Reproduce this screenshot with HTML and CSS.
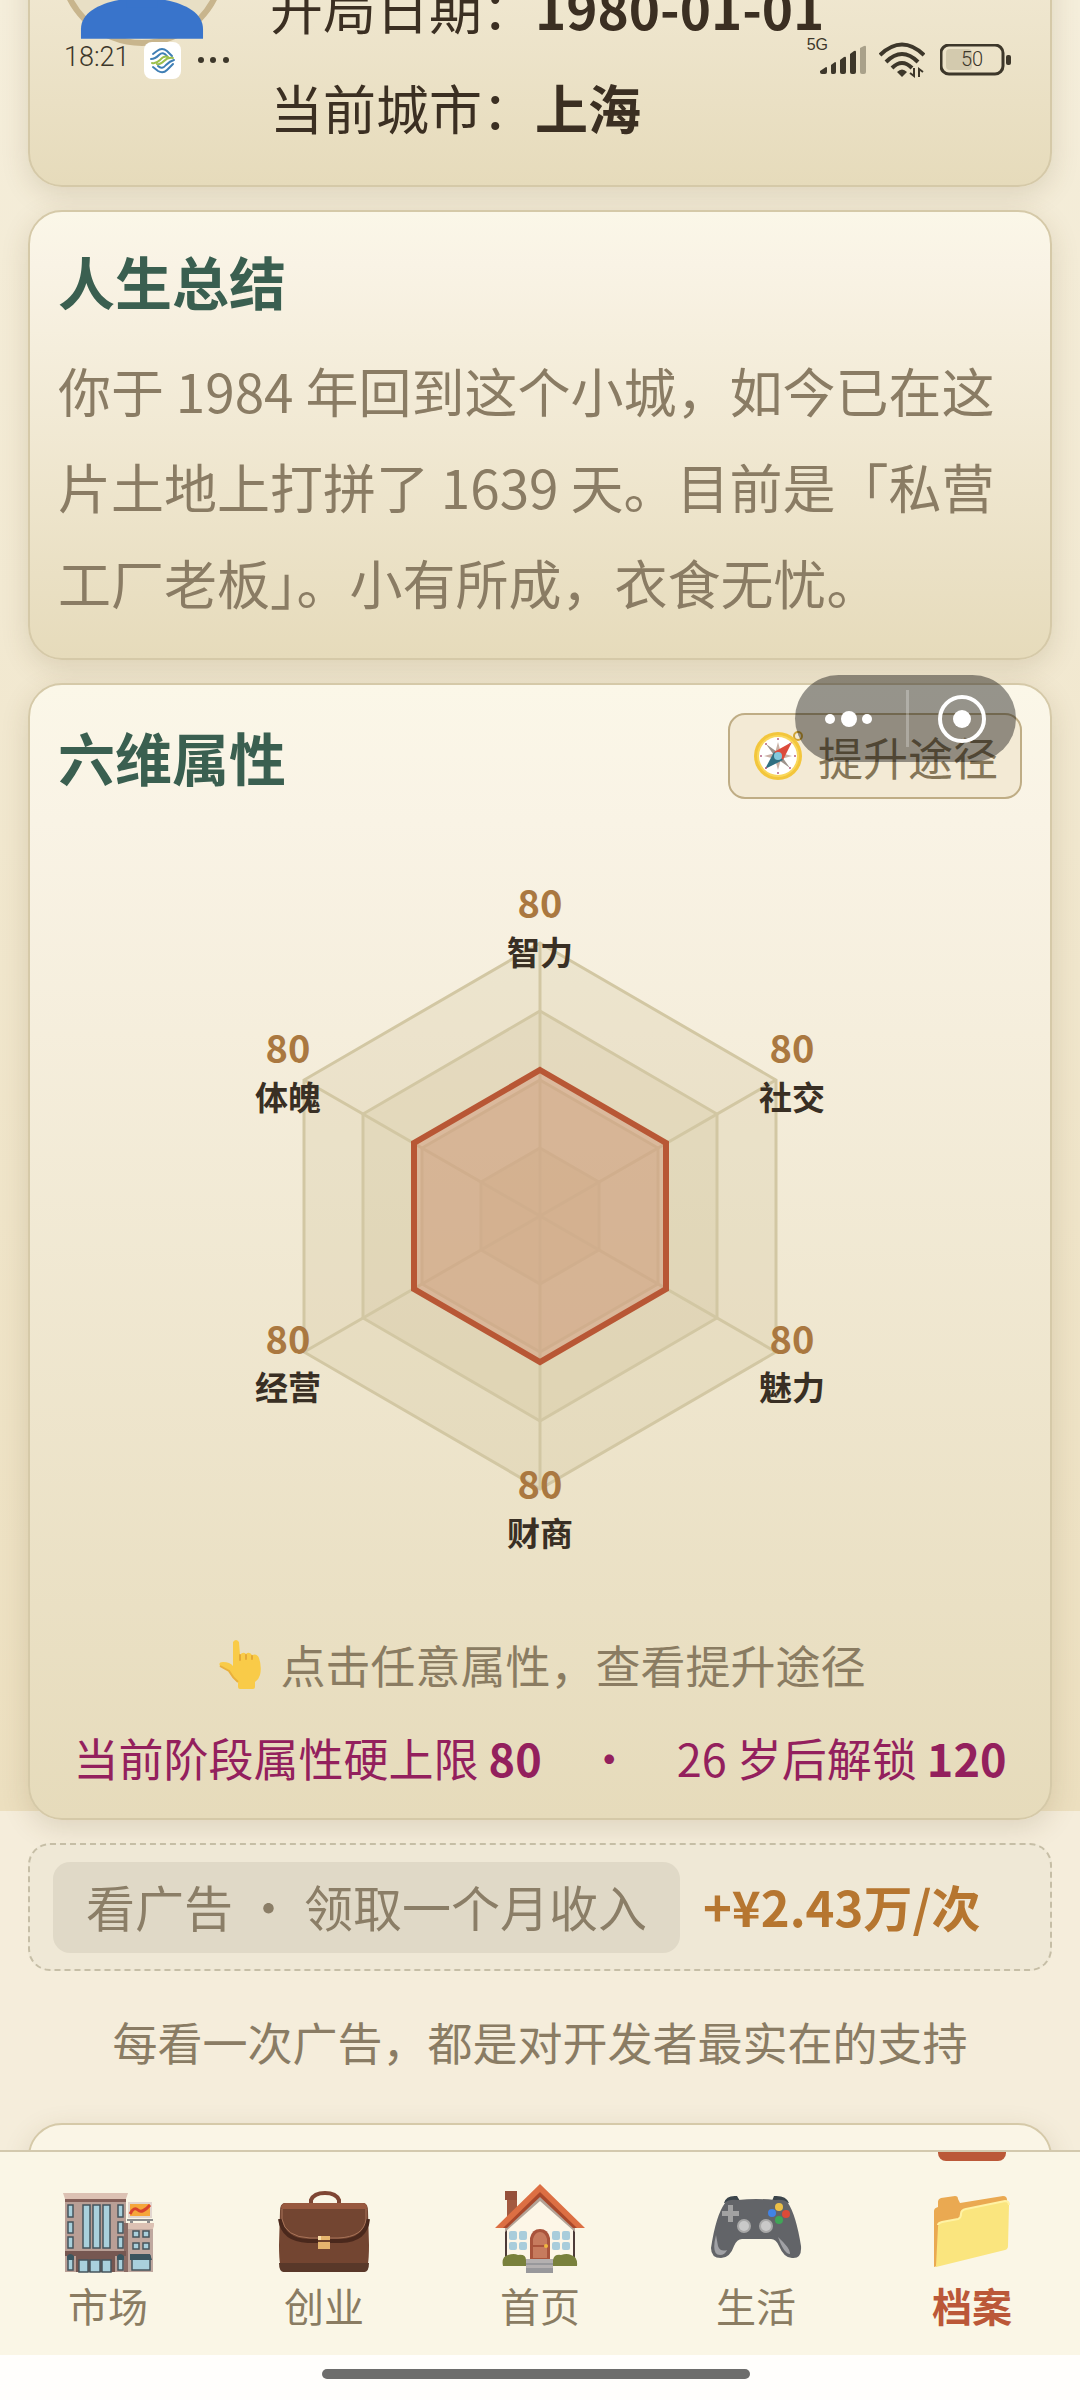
FILE: index.html
```html
<!DOCTYPE html>
<html lang="zh-CN">
<head>
<meta charset="utf-8">
<meta name="viewport" content="width=device-width, initial-scale=1">
<title>档案</title>
<link rel="stylesheet" href="styles.css">
</head>
<body>
<div class="status">
  <div class="status-left">
    <span class="clock">18:21</span>
    <svg class="carrier" viewBox="0 0 37 37" aria-hidden="true">
      <rect width="37" height="37" rx="8" fill="#fff"/>
      <g fill="none" stroke-linecap="round">
        <path d="M9 12 L13 9 Q18 5 23 9 L28 14 M7 17 Q11 17 15 13 Q19 9 23 14 M9 25 L14 29 Q19 32 23 28 L29 22 M30 18 Q26 19 22 23 Q18 28 14 24" stroke="#3f7fb5" stroke-width="2"/>
        <path d="M8 21 Q12 22 16 18 Q20 13 24 15 M13 22 Q16 23 20 19 Q24 15 29 16" stroke="#9cc04c" stroke-width="2"/>
      </g>
    </svg>
    <svg class="more" viewBox="0 0 32 8" aria-hidden="true" fill="#3d372a"><circle cx="4" cy="4" r="3"/><circle cx="16" cy="4" r="3"/><circle cx="29" cy="4" r="3"/></svg>
  </div>
  <div class="status-right">
    <span class="net">5G</span>
    <svg class="signal" viewBox="0 0 46 30" aria-hidden="true" fill="#3d372a">
      <path d="M0 26 L6 22 Q7 22 7 23 V27 Q7 29 5 29 H2 Q0 29 0 27Z"/>
      <path d="M11 20 L15 17 Q16 17 16 18 V27 Q16 29 14 29 H12 Q11 29 11 27Z"/>
      <path d="M20 15 L24 12 Q26 11 26 13 V27 Q26 29 24 29 H22 Q20 29 20 27Z"/>
      <path d="M30 9 L34 6 Q36 5 36 7 V27 Q36 29 34 29 H32 Q30 29 30 27Z"/>
      <path d="M40 3 L44 1 Q46 0 46 2 V27 Q46 29 44 29 H42 Q40 29 40 27Z" fill="#a9a18a"/>
    </svg>
    <svg class="wifi" viewBox="0 0 46 36" aria-hidden="true">
      <g fill="none" stroke="#3d372a" stroke-width="4">
        <path d="M1 13 Q23 -8 45 13"/><path d="M7 20 Q23 4 39 20"/><path d="M13 26 Q23 16 33 26"/>
      </g>
      <path d="M18 30 Q23 25 28 30 L23 35Z" fill="#3d372a"/>
      <path d="M35 26 V34 L31 31 M40 35 V27 L44 30" fill="none" stroke="#3d372a" stroke-width="2"/>
    </svg>
    <svg class="battery" viewBox="0 0 72 32" aria-hidden="true">
      <rect x="6" y="5" width="26" height="21" rx="4" fill="#d3caae"/>
      <rect x="1" y="1" width="62" height="29" rx="8" fill="none" stroke="#3d372a" stroke-width="3"/>
      <rect x="66" y="11" width="5" height="10" rx="2" fill="#3d372a"/>
      <text x="32" y="22" text-anchor="middle" class="battery-text">50</text>
    </svg>
  </div>
</div>

<main class="content">
  <section class="card profile">
    <div class="avatar">
      <svg viewBox="0 0 128 156" aria-hidden="true"><circle cx="64" cy="58" r="42" fill="#3974cb"/><path d="M2 156 V146 C2 104 126 104 126 146 V156Z" fill="#3974cb"/><path d="M48 90 H80 V124 H48Z" fill="#3974cb"/></svg>
    </div>
    <div class="info">
      <p>开局日期：<strong>1980-01-01</strong></p>
      <p>当前城市：<strong>上海</strong></p>
    </div>
  </section>

  <section class="card summary">
    <h2>人生总结</h2>
    <p>你于 1984 年回到这个小城，如今已在这片土地上打拼了 1639 天。目前是「私营工厂老板」。小有所成，衣食无忧。</p>
  </section>

  <section class="card attributes">
    <header class="card-head">
      <h2>六维属性</h2>
      <button class="improve" type="button">
        <svg viewBox="0 0 50 50" aria-hidden="true">
          <circle cx="44" cy="5" r="4" fill="none" stroke="#d0a335" stroke-width="2"/>
          <circle cx="24" cy="25" r="24" fill="#f3c63c"/>
          <circle cx="24" cy="25" r="21" fill="#f9d75c"/>
          <circle cx="24" cy="25" r="19" fill="#fff"/>
          <path d="M24 11 L27 22 L38 25 L27 28 L24 39 L21 28 L10 25 L21 22Z" fill="#c9b1a5"/>
          <path d="M36 37 L22 27 L12 13 L26 23Z" fill="#9d938c"/>
          <path d="M38 11 L29 29 L20 21Z" fill="#dc4b3c"/>
          <path d="M11 38 L20 21 L29 29Z" fill="#2f7082"/>
          <circle cx="24" cy="25" r="4" fill="#83c8dc"/>
          <g fill="#b45f83"><circle cx="24" cy="8" r="1"/><circle cx="24" cy="42" r="1"/><circle cx="7" cy="25" r="1"/><circle cx="41" cy="25" r="1"/><circle cx="12" cy="13" r="1"/><circle cx="36" cy="13" r="1"/><circle cx="12" cy="37" r="1"/><circle cx="36" cy="37" r="1"/></g>
        </svg>
        提升途径
      </button>
    </header>
    <svg class="radar" viewBox="-340 -340 680 680" role="img" aria-label="六维属性">
      <g class="grid">
        <polygon points="0,-273 236,-136 236,136 0,273 -236,136 -236,-136"/>
        <polygon points="0,-205 177,-102 177,102 0,205 -177,102 -177,-102"/>
        <polygon points="0,-136 118,-68 118,68 0,136 -118,68 -118,-68"/>
        <polygon points="0,-68 59,-34 59,34 0,68 -59,34 -59,-34"/>
        <path d="M0 -273 V273 M-236 -136 L236 136 M-236 136 L236 -136"/>
      </g>
      <polygon class="area" points="0,-146 126,-73 126,73 0,146 -126,73 -126,-73"/>
      <g class="value"><text x="0" y="-298">80</text><text x="252" y="-153">80</text><text x="252" y="138">80</text><text x="0" y="283">80</text><text x="-252" y="138">80</text><text x="-252" y="-153">80</text></g>
      <g class="name"><text x="0" y="-251">智力</text><text x="252" y="-106">社交</text><text x="252" y="184">魅力</text><text x="0" y="330">财商</text><text x="-252" y="184">经营</text><text x="-252" y="-106">体魄</text></g>
    </svg>
    <p class="hint">
      <svg viewBox="0 0 46 52" aria-hidden="true"><path d="M15 3 Q18 -1 21 3 L22 16 Q25 12 28 15 Q31 12 34 16 Q39 14 41 19 Q44 28 42 36 Q41 40 37 43 V48 Q37 50 35 50 H22 Q20 50 20 48 V43 Q15 39 11 32 L2 27 Q0 23 5 23 Q12 23 15 27Z" fill="#f9cb48"/><path d="M22 16 V21 M28 16 V20 M34 17 V20" fill="none" stroke="#e4a937" stroke-width="2" stroke-linecap="round"/><path d="M2 27 L11 32 Q15 39 20 43" fill="none" stroke="#e9b03c" stroke-width="2"/></svg>
      点击任意属性，查看提升途径
    </p>
    <p class="limit">当前阶段属性硬上限 <strong>80</strong>　·　26 岁后解锁 <strong>120</strong></p>
  </section>

  <div class="ad">
    <button class="ad-button" type="button">看广告 · 领取一个月收入</button>
    <strong class="reward">+¥2.43万/次</strong>
  </div>
  <p class="support">每看一次广告，都是对开发者最实在的支持</p>
  <section class="card next"></section>
</main>

<div class="capsule">
  <button type="button" aria-label="更多"><svg viewBox="0 0 110 87"><circle cx="35" cy="44" r="5"/><circle cx="54" cy="44" r="8"/><circle cx="72" cy="44" r="5"/></svg></button>
  <button type="button" aria-label="关闭"><svg viewBox="0 0 110 87"><circle cx="56" cy="44" r="22" fill="none" stroke="#fff" stroke-width="4"/><circle cx="56" cy="44" r="9"/></svg></button>
</div>

<nav class="tabs">
  <a href="#market">
    <svg viewBox="0 0 92 92" aria-hidden="true">
      <path d="M3 15 H64 V89 H3Z" fill="#b99f96"/><path d="M1 10 H66 L64 16 H3Z" fill="#dcc1b3"/><path d="M3 16 H64 V19 H3Z" fill="#846059"/>
      <path d="M64 44 H91 V89 H64Z" fill="#bfa89f"/><path d="M64 40 H93 L91 46 H64Z" fill="#dcc1b3"/><path d="M62 40 H66 V89 H62Z" fill="#8c6c65"/>
      <path d="M3 68 H64 V73 H3Z" fill="#765751"/><path d="M14 72 H53 V89 H14Z" fill="#765751"/>
      <g fill="#a9d0dc" stroke="#45545c" stroke-width="1.5"><path d="M21 22 H28 V65 H21Z M31 22 H38 V65 H31Z M41 22 H48 V65 H41Z M6 22 H11 V34 H6Z M6 39 H11 V50 H6Z M6 54 H11 V65 H6Z M56 22 H61 V34 H56Z M56 39 H61 V50 H56Z M56 54 H61 V65 H56Z M17 77 H26 V89 H17Z M28 77 H38 V89 H28Z M40 77 H49 V89 H40Z M6 74 H11 V87 H6Z M56 74 H61 V87 H56Z M71 48 H77 V54 H71Z M81 48 H87 V54 H81Z M71 60 H77 V66 H71Z M81 60 H87 V66 H81Z M70 73 H88 V87 H70Z"/></g>
      <path d="M5 77 V73 Q8 69 12 73 V77Z M55 77 V73 Q58 69 62 73 V77Z M68 77 V71 H88 L90 77Z" fill="#3a555f"/>
      <path d="M66 19 H90 V35 H66Z" fill="#e2d6cf"/><path d="M68 21 H88 V33 H68Z" fill="#f5a63a"/><path d="M68 31 Q72 23 76 27 T88 22" fill="none" stroke="#d9432c" stroke-width="3"/><path d="M65 36 H91 V38 H65Z M68 38 H71 V40 H68Z M85 38 H88 V40 H85Z" fill="#8c8c8c"/>
    </svg>
    <span>市场</span>
  </a>
  <a href="#startup">
    <svg viewBox="0 0 92 92" aria-hidden="true">
      <path d="M33 22 V17 Q36 10 47 10 Q58 10 61 17 V22" fill="none" stroke="#7f4634" stroke-width="4"/>
      <path d="M6 20 Q2 21 2 28 L1 62 Q1 89 6 89 H86 Q91 89 91 62 L90 28 Q90 21 86 20Z" fill="#734531"/>
      <path d="M1 80 Q1 89 6 89 H86 Q91 89 91 80Z" fill="#593829"/>
      <path d="M3 24 Q4 20 8 20 H85 Q89 20 89 25 L88 27 H4Z" fill="#98593f"/>
      <path d="M2 36 Q5 57 30 58 H63 Q88 57 90 36" fill="none" stroke="#4a281c" stroke-width="4"/>
      <path d="M4 26 V36 Q7 54 32 55 H60 Q86 54 88 36 V26" fill="#734531" stroke="#a87358" stroke-width="1"/>
      <path d="M40 53 H52 V66 H40Z" fill="#e5b46e"/><path d="M40 57 H52 V59 H40Z" fill="#6d412b"/><path d="M40 53 H43 V57 H40Z" fill="#f8dda9"/>
    </svg>
    <span>创业</span>
  </a>
  <a href="#home">
    <svg viewBox="0 0 92 92" aria-hidden="true">
      <path d="M13 8 H23 V30 L13 38Z" fill="#a35a40"/><path d="M11 8 H23 V17 H11Z" fill="#95503a"/>
      <path d="M12 42 L46 10 L80 42 V80 H12Z" fill="#fdf6e7"/><path d="M12 44 V76 M80 44 V76" stroke="#4d3b38" stroke-width="2"/>
      <path d="M11 44 L46 13 L81 44 V49 L46 18 L11 49Z" fill="#b3a397"/>
      <path d="M46 1 L91 45 H81 L46 11 L11 45 H1Z" fill="#dc6f43"/><path d="M46 9 L83 45 H79 L46 14 L13 45 H9Z" fill="#a9482b"/>
      <path d="M36 77 V55 Q38 46 46 46 Q54 46 56 55 V77Z" fill="#a9543c"/><path d="M39 75 V56 Q41 49 46 49 Q51 49 53 56 V75Z" fill="#c77b5e"/><path d="M38 63 H54" stroke="#a9543c" stroke-width="2"/><circle cx="52" cy="63" r="2" fill="#f0b840"/>
      <g fill="#a9cddb"><rect x="15" y="48" width="8" height="9" rx="2"/><rect x="25" y="48" width="8" height="9" rx="2"/><rect x="15" y="59" width="8" height="8" rx="2"/><rect x="25" y="59" width="8" height="8" rx="2"/><rect x="58" y="48" width="8" height="9" rx="2"/><rect x="68" y="48" width="8" height="9" rx="2"/><rect x="58" y="59" width="8" height="8" rx="2"/><rect x="68" y="59" width="8" height="8" rx="2"/></g>
      <path d="M9 83 Q7 74 14 72 Q20 70 24 72 Q32 71 32 77 V83Z M59 83 V77 Q60 71 67 72 Q73 70 77 72 Q84 74 83 83Z" fill="#79813c"/>
      <path d="M32 76 H59 V90 H32Z" fill="#b4b0b0"/><path d="M32 80 H59 V82 H32Z M32 85 H59 V90 H32Z" fill="#98989b"/>
    </svg>
    <span>首页</span>
  </a>
  <a href="#life">
    <svg viewBox="0 0 92 92" aria-hidden="true">
      <path d="M14 20 Q16 12 27 13 L30 18 Z M62 18 L64 13 Q76 12 79 20Z" fill="#3b454b"/>
      <path d="M15 20 Q18 16 28 17 Q46 15 65 17 Q75 16 78 20 Q86 32 91 63 Q92 76 82 75 Q74 75 69 63 Q66 56 61 56 H32 Q27 56 24 63 Q20 75 11 75 Q1 75 1 65 Q6 32 15 20Z" fill="#626468"/>
      <path d="M6 52 Q1 72 10 72 Q15 72 17 67 Q10 69 8 63Z M68 54 Q74 71 80 71 Q81 66 68 54Z" fill="#a0a1a5"/>
      <path d="M18 22 H23 V28 H29 V33 H23 V39 H18 V33 H12 V28 H18Z" fill="#a2a2a2"/>
      <circle cx="34" cy="43" r="7" fill="#a8a8a8"/><circle cx="34" cy="43" r="5" fill="#c9c9c9"/><circle cx="56" cy="43" r="7" fill="#a8a8a8"/><circle cx="56" cy="43" r="5" fill="#c9c9c9"/>
      <circle cx="69" cy="24" r="4" fill="#ecc047"/><circle cx="62" cy="30" r="4" fill="#4183e5"/><circle cx="76" cy="31" r="4" fill="#dc4a38"/><circle cx="69" cy="37" r="4" fill="#40a657"/>
    </svg>
    <span>生活</span>
  </a>
  <a href="#archive" class="active" aria-current="page">
    <svg viewBox="0 0 92 92" aria-hidden="true">
      <path d="M8 84 V28 Q8 25 12 24 V19 Q12 16 15 15 L29 13 Q32 13 32 16 L34 20 L77 13 Q81 13 81 17 L80 60Z" fill="#eaa951"/>
      <path d="M10 83 L12 44 Q12 40 16 39 L32 36 Q35 35 35 31 Q35 27 40 26 L79 18 Q83 18 83 22 L82 63 Q82 66 79 67 L10 84Z" fill="#fae57e"/>
      <path d="M12 42 Q12 40 16 39 L32 36 Q35 35 35 31 Q35 27 40 26 L79 18 Q83 18 83 22" fill="none" stroke="#fff2a4" stroke-width="2"/>
    </svg>
    <span>档案</span>
  </a>
</nav>
<div class="gesture"><i></i></div>
</body>
</html>
```
FILE: styles.css
```css
* { box-sizing: border-box; }

body {
  margin: 0;
  height: 100vh;
  display: flex;
  flex-direction: column;
  overflow: hidden;
  position: relative;
  font-family: "Noto Sans CJK SC", "Noto Sans", sans-serif;
  font-size: 45px;
  color: #3b2f22;
  background: #fffefc;
}

h2, p { margin: 0; }
button { border: 0; padding: 0; font: inherit; color: inherit; background: none; }
svg { display: block; flex: none; }

/* status bar */
.status {
  position: absolute;
  z-index: 3;
  top: 0;
  left: 0;
  right: 0;
  height: 120px;
  padding: 0 68px 0 64px;
  display: flex;
  align-items: center;
  justify-content: space-between;
  color: #3d372a;
}
.status-left, .status-right { display: flex; align-items: center; }
.clock { width: 80px; padding-bottom: 6px; font: 300 27px/30px "Roboto", sans-serif; }
.carrier { width: 37px; height: 37px; }
.more { width: 32px; height: 8px; margin-left: 16px; }
.net { font: 16px/18px "Liberation Sans", sans-serif; align-self: flex-start; margin: -6px -8px 0 0; }
.signal { width: 46px; height: 30px; margin-right: 13px; }
.wifi { width: 46px; height: 36px; margin-right: 15px; }
.battery { width: 72px; height: 32px; }
.battery-text { font: 300 20px "Roboto", sans-serif; fill: #3d372a; }

/* scrolling content */
.content {
  flex: 1;
  min-height: 0;
  overflow: hidden;
  padding: 0 28px;
  display: flex;
  flex-direction: column;
  gap: 23px;
  background: linear-gradient(#f5eedb, #ecdfbf) 0 0 / 100% 1811px no-repeat #f5eddb;
}
.content > * { flex: none; }

.card {
  padding: 28px;
  border: 2px solid #d5c9a8;
  border-radius: 34px;
  background: linear-gradient(#fbf7e8, #f9f3e5 12%, #e6dbbb);
  box-shadow: 0 8px 28px rgba(90, 70, 30, .15);
}
.card h2 { font-size: 57px; line-height: 80px; font-weight: 700; color: #3a5f50; }

.profile { display: flex; min-height: 448px; margin-top: -261px; padding-bottom: 30px; gap: 44px; }
.avatar {
  width: 168px;
  height: 168px;
  align-self: center;
  display: flex;
  align-items: center;
  justify-content: center;
  border: 6px solid #c8b58d;
  border-radius: 50%;
  background: #e8dfc5;
}
.avatar svg { width: 126px; height: 154px; }
.info { display: flex; flex-direction: column; justify-content: flex-end; gap: 4px; font-size: 53px; line-height: 96px; }

.summary h2 { margin-bottom: 22px; }
.summary p { font-size: 53px; line-height: 96px; color: #8a7c64; }

.card-head { display: flex; align-items: center; justify-content: space-between; }
.improve {
  height: 86px;
  padding: 0 22px 0 24px;
  display: flex;
  align-items: center;
  gap: 14px;
  border: 2px solid #bfad85;
  border-radius: 17px;
  color: #857658;
  background: #f3ead5;
}
.improve svg { width: 50px; height: 50px; }

.radar { width: 680px; height: 680px; margin: 77px auto 0; font-family: "Noto Sans CJK SC", sans-serif; font-weight: 700; text-anchor: middle; }
.grid polygon { fill: rgba(200, 184, 138, .2); stroke: #d2c7a3; stroke-width: 3; }
.grid path { fill: none; stroke: #d2c7a3; stroke-width: 3; }
.area { fill: rgba(206, 134, 104, .38); stroke: #b85735; stroke-width: 6; }
.value { font-size: 38px; fill: #aa7840; }
.name { font-size: 33px; fill: #392f24; }

.hint { display: flex; justify-content: center; align-items: center; gap: 16px; margin-top: 73px; padding-left: 4px; line-height: 72px; color: #8a7c62; }
.hint svg { width: 46px; height: 52px; }
.limit { margin-top: 24px; line-height: 65px; text-align: center; color: #93205d; }

/* rewarded advert */
.ad {
  height: 128px;
  padding: 0 23px;
  display: flex;
  align-items: center;
  gap: 23px;
  border: 2px dashed #c6bea6;
  border-radius: 22px;
  background: #efe8d6;
  font-size: 49px;
}
.ad-button { height: 91px; padding: 0 33px 4px; border-radius: 17px; color: #8b7e67; background: #e0d9c7; }
.reward { padding-bottom: 4px; color: #b67630; }
.support { margin: 12px 0 22px; line-height: 72px; text-align: center; color: #8a7c64; }
.next { height: 400px; background: #faf5e6; }

/* floating mini-program capsule */
.capsule {
  position: absolute;
  z-index: 2;
  top: 675px;
  right: 64px;
  width: 221px;
  height: 87px;
  display: flex;
  border-radius: 44px;
  background: rgba(0, 0, 0, .4);
}
.capsule button { flex: 1; }
.capsule svg { width: 110px; height: 87px; fill: #fff; }
.capsule button + button { background: linear-gradient(rgba(255, 255, 255, .25), rgba(255, 255, 255, .25)) 0 50% / 3px 57px no-repeat; }

/* bottom tabs */
.tabs { display: flex; height: 205px; border-top: 2px solid #d3c9ae; background: #faf6e6; }
.tabs a {
  flex: 1;
  position: relative;
  display: flex;
  flex-direction: column;
  align-items: center;
  padding-top: 31px;
  font-size: 40px;
  line-height: 60px;
  color: #8a7c62;
  text-decoration: none;
}
.tabs svg { width: 92px; height: 92px; }
.tabs .active { color: #bb5838; font-weight: 700; }
.tabs .active::before {
  content: "";
  position: absolute;
  top: 0;
  width: 68px;
  height: 9px;
  border-radius: 0 0 8px 8px;
  background: #bb5838;
}
.gesture { display: flex; height: 45px; justify-content: center; padding: 14px 8px 0 0; }
.gesture i { width: 428px; height: 10px; border-radius: 5px; background: #6d6d6c; }
```
